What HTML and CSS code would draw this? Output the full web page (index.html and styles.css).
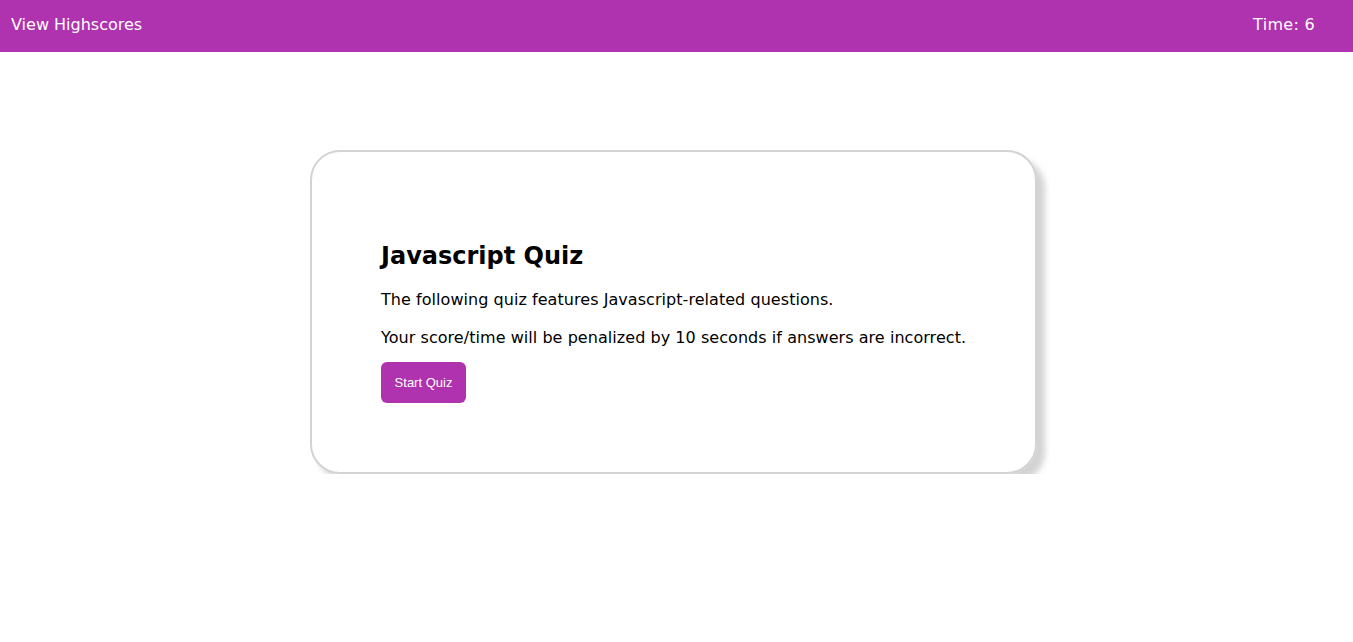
FILE: index.html
```html
<!DOCTYPE html>
<html>
<head>
<meta charset="utf-8">
<link rel="stylesheet" href="styles.css">
</head>
<body>
<header class="topbar">
  <a class="highscores">View Highscores</a>
  <span class="timer">Time: 6</span>
</header>
<main class="stage">
  <section class="card">
    <h1 class="title">Javascript Quiz</h1>
    <p class="text">The following quiz features Javascript-related questions.</p>
    <p class="text last">Your score/time will be penalized by 10 seconds if answers are incorrect.</p>
    <button class="start">Start Quiz</button>
  </section>
</main>
</body>
</html>
```
FILE: styles.css
```css
* { box-sizing: border-box; }
html, body { margin: 0; padding: 0; background: #fff; }
body { font-family: "DejaVu Sans", Verdana, sans-serif; color: #000; }
.topbar {
  height: 52px;
  background: #af32af;
  display: flex;
  align-items: center;
  justify-content: space-between;
  padding: 0 38px 4px 11px;
  color: #fff;
  font-size: 16px;
}
.highscores { color: #fff; }
.timer { letter-spacing: 0.3px; }
.stage { display: flex; justify-content: center; padding-top: 98px; }
.card {
  width: 727px;
  height: 324px;
  margin-left: -6px;
  border: 2px solid #d3d3d3;
  border-radius: 30px;
  box-shadow: 8px 8px 6px #d3d3d3;
  padding: 90px 68px 0 69px;
}
.title { margin: 0 0 20px; font-size: 24px; font-weight: bold; }
.text { margin: 0 0 19px; font-size: 16px; letter-spacing: 0.05px; }
.text.last { margin-bottom: 15px; }
.start {
  display: block;
  margin-top: 0;
  background: #af32af;
  color: #fff;
  border: none;
  border-radius: 6px;
  font-family: "Liberation Sans", Arial, sans-serif;
  font-size: 13px;
  width: 85px;
  height: 41px;
  padding: 0;
}
```
